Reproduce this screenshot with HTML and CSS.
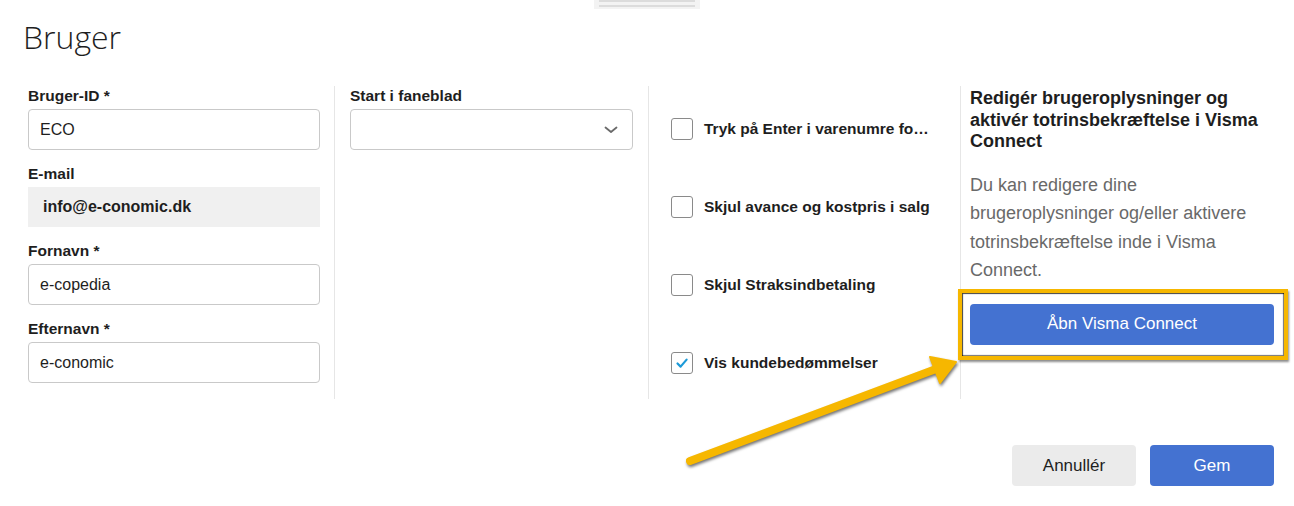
FILE: index.html
```html
<!DOCTYPE html>
<html lang="da">
<head>
	<title>Bruger</title>
	<meta charset="utf-8">
	<link rel="stylesheet" href="styles.css">
</head>
<body>
	<div class="handle"><span></span><span></span></div>
	<h1 class="title">Bruger</h1>

	<div class="form">
		<!-- brugeroplysninger -->
		<div class="col col-user">
			<div class="field">
				<label class="label">Bruger-ID *</label>
				<input class="input" value="ECO">
			</div>
			<div class="field">
				<label class="label">E-mail</label>
				<div class="readonly">info@e-conomic.dk</div>
			</div>
			<div class="field">
				<label class="label">Fornavn *</label>
				<input class="input" value="e-copedia">
			</div>
			<div class="field">
				<label class="label">Efternavn *</label>
				<input class="input" value="e-conomic">
			</div>
		</div>

		<!-- faneblad -->
		<div class="col col-tab">
			<div class="field">
				<label class="label">Start i faneblad</label>
				<div class="select">
					<svg class="chevron" width="14" height="8" viewBox="0 0 14 8">
						<polyline points="1.5,1.5 7,6 12.5,1.5" fill="none" stroke="#6a6a6a" stroke-width="1.8" stroke-linecap="round" stroke-linejoin="round"/>
					</svg>
				</div>
			</div>
		</div>

		<!-- indstillinger -->
		<div class="col col-checks">
			<div class="check">
				<span class="box"></span>
				<span class="check-label">Tryk på Enter i varenumre fo…</span>
			</div>
			<div class="check">
				<span class="box"></span>
				<span class="check-label">Skjul avance og kostpris i salg</span>
			</div>
			<div class="check">
				<span class="box"></span>
				<span class="check-label">Skjul Straksindbetaling</span>
			</div>
			<div class="check">
				<span class="box">
					<svg width="20" height="20" viewBox="0 0 20 20">
						<path d="M5.5 10.5 L8.6 13.6 L14.6 6.6" fill="none" stroke="#1c9ad8" stroke-width="2.2" stroke-linecap="round" stroke-linejoin="round"/>
					</svg>
				</span>
				<span class="check-label">Vis kundebedømmelser</span>
			</div>
		</div>

		<!-- visma connect -->
		<div class="col col-connect">
			<h3 class="connect-title">Redigér brugeroplysninger og aktivér totrinsbekræftelse i Visma Connect</h3>
			<p class="connect-text">Du kan redigere dine brugeroplysninger og/eller aktivere totrinsbekræftelse inde i Visma Connect.</p>
			<button class="btn btn-primary btn-wide">Åbn Visma Connect</button>
		</div>
	</div>

	<div class="actions">
		<button class="btn btn-light">Annullér</button>
		<button class="btn btn-primary">Gem</button>
	</div>

	<!-- annotation on top of the screenshot -->
	<div class="mark"></div>
	<svg class="arrow" width="1294" height="506" viewBox="0 0 1294 506">
		<line x1="690" y1="461" x2="936" y2="369" stroke="#f6b700" stroke-width="8" stroke-linecap="round"/>
		<polygon points="956,362 930,357 940,383" fill="#f6b700" stroke="#f6b700" stroke-width="2" stroke-linejoin="round"/>
	</svg>
</body>
</html>
```

FILE: styles.css
```css
body {
	margin: 0;
	width: 1294px;
	height: 506px;
	overflow: hidden;
	position: relative;
	background: #ffffff;
	color: #1e1e1e;
	font-family: "Liberation Sans", Arial, sans-serif;
}

/* little drag handle at the top */
.handle {
	width: 106px;
	height: 9px;
	margin: 0 auto;
	background: #f3f3f3;
	display: flex;
	flex-direction: column;
	gap: 3px;
	padding: 0 5px;
	box-sizing: border-box;
}
.handle span {
	display: block;
	height: 2px;
	background: #dcdcdc;
}

.title {
	margin: 8px 0 0 23px;
	font-family: "Open Sans", sans-serif;
	font-weight: 300;
	font-size: 32px;
	line-height: 40px;
	color: #1e1e1e;
}

.form {
	display: grid;
	grid-template-columns: 320px 314px 312px 334px;
	padding-left: 14px;
	margin-top: 29px;
	height: 313px;
}
.col {
	box-sizing: border-box;
}
.col-user {
	padding: 1px 14px 0 14px;
}
.col-tab {
	border-left: 1px solid #e6e6e6;
	padding: 1px 15px 0 15px;
}
.col-checks {
	border-left: 1px solid #e6e6e6;
	padding: 32px 0 0 22px;
	display: flex;
	flex-direction: column;
	gap: 56px;
}
.col-connect {
	border-left: 1px solid #e6e6e6;
	padding: 2px 20px 0 9px;
}

.field {
	margin-bottom: 15px;
}
.label {
	display: block;
	font-size: 15.5px;
	font-weight: bold;
	line-height: 18px;
	margin-bottom: 4px;
	color: #1e1e1e;
}
.input {
	display: block;
	width: 100%;
	height: 41px;
	box-sizing: border-box;
	border: 1px solid #c9c9c9;
	border-radius: 4px;
	padding: 0 11px;
	font-family: "Liberation Sans", Arial, sans-serif;
	font-size: 16px;
	color: #1e1e1e;
	background: #ffffff;
	outline: none;
}
.readonly {
	height: 40px;
	background: #f0f0f0;
	padding-left: 15px;
	font-size: 16px;
	font-weight: bold;
	line-height: 40px;
	color: #1e1e1e;
}
.select {
	height: 41px;
	box-sizing: border-box;
	border: 1px solid #c9c9c9;
	border-radius: 4px;
	display: flex;
	align-items: center;
	justify-content: flex-end;
	padding-right: 14px;
}

.check {
	display: flex;
	align-items: center;
	gap: 11px;
	height: 22px;
}
.box {
	width: 22px;
	height: 22px;
	box-sizing: border-box;
	border: 1.5px solid #8a8a8a;
	border-radius: 3px;
	background: #ffffff;
	flex: none;
	display: flex;
	align-items: center;
	justify-content: center;
}
.check-label {
	font-size: 15.5px;
	font-weight: bold;
	color: #1e1e1e;
	white-space: nowrap;
}

.connect-title {
	margin: 0;
	font-size: 18px;
	line-height: 21.5px;
	font-weight: bold;
	color: #1e1e1e;
}
.connect-text {
	margin: 18px 0 19px 0;
	font-size: 18px;
	line-height: 28.5px;
	color: #696969;
}

.btn {
	height: 41px;
	border: none;
	border-radius: 4px;
	font-family: "Liberation Sans", Arial, sans-serif;
	font-size: 17px;
	padding: 0;
	width: 124px;
}
.btn-wide {
	width: 100%;
}
.btn-primary {
	background: #4472d1;
	color: #ffffff;
}
.btn-light {
	background: #ebebeb;
	color: #1e1e1e;
}

.actions {
	display: flex;
	justify-content: flex-end;
	gap: 14px;
	padding-right: 20px;
	margin-top: 46px;
}

/* yellow annotation */
.mark {
	position: absolute;
	left: 958px;
	top: 289px;
	width: 330px;
	height: 71px;
	box-sizing: border-box;
	border: 4px solid #f6b700;
	box-shadow: inset 1px 1px 1px rgba(0,0,0,0.75), inset -1px -1px 1px rgba(0,0,0,0.55), 1px 2px 2px rgba(0,0,0,0.45);
	pointer-events: none;
}
.arrow {
	position: absolute;
	left: 0;
	top: 0;
	pointer-events: none;
	filter: drop-shadow(1px 2px 1.5px rgba(0,0,0,0.55));
}
```
